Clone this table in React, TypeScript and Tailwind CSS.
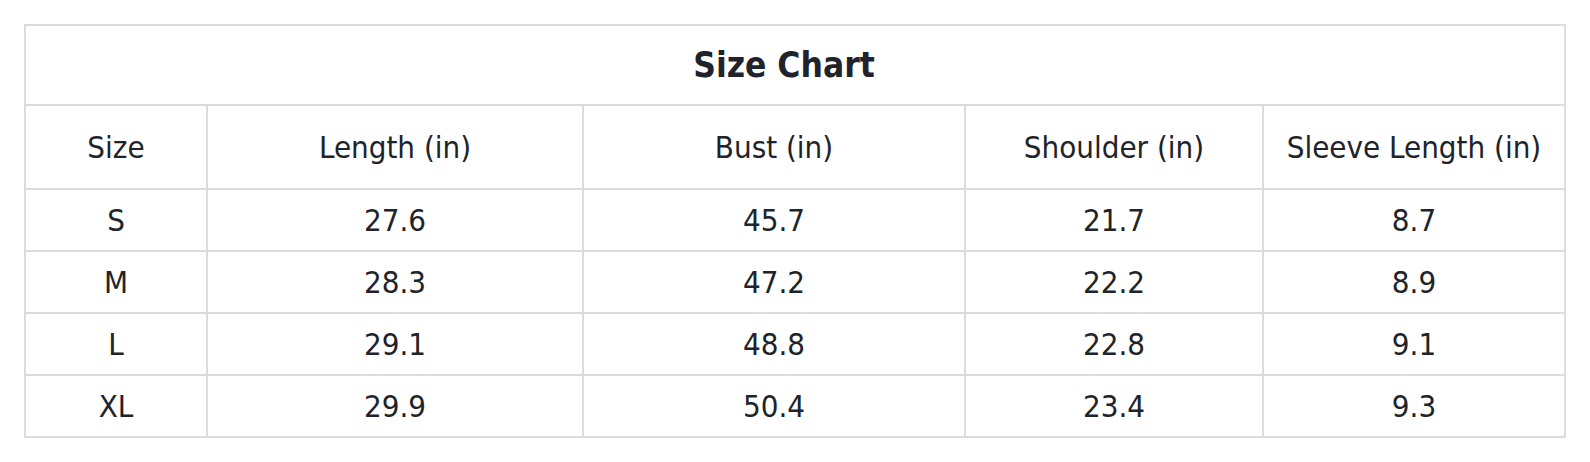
const COLUMNS = [
  { label: 'Size', width: 'w-[182px]' },
  { label: 'Length (in)', width: 'w-[376px]' },
  { label: 'Bust (in)', width: 'w-[382px]' },
  { label: 'Shoulder (in)', width: 'w-[298px]' },
  { label: 'Sleeve Length (in)', width: 'w-[302px]' },
]

const ROWS: string[][] = [
  ['S', '27.6', '45.7', '21.7', '8.7'],
  ['M', '28.3', '47.2', '22.2', '8.9'],
  ['L', '29.1', '48.8', '22.8', '9.1'],
  ['XL', '29.9', '50.4', '23.4', '9.3'],
]

const cell = 'border-2 border-[#dcdcdc] p-0 text-center align-middle'

export default function App() {
  return (
    <div className="min-h-[462px] w-[1590px] bg-white p-6 font-['DejaVu_Sans_Condensed','DejaVu_Sans',sans-serif] text-[#202329] [font-stretch:condensed]">
      <table className="w-[1542px] table-fixed border-collapse">
        <colgroup>
          {COLUMNS.map(col => (
            <col key={col.label} className={col.width} />
          ))}
        </colgroup>
        <thead>
          <tr className="h-[80px]">
            <th colSpan={5} className={`${cell} pr-[22px] text-[35px] font-bold`}>
              Size Chart
            </th>
          </tr>
          <tr className="h-[84px]">
            {COLUMNS.map(col => (
              <th key={col.label} className={`${cell} text-[31px] font-normal`}>
                {col.label}
              </th>
            ))}
          </tr>
        </thead>
        <tbody>
          {ROWS.map(row => (
            <tr key={row[0]} className="h-[62px]">
              {row.map((value, i) => (
                <td key={i} className={`${cell} text-[31px]`}>
                  {value}
                </td>
              ))}
            </tr>
          ))}
        </tbody>
      </table>
    </div>
  )
}
